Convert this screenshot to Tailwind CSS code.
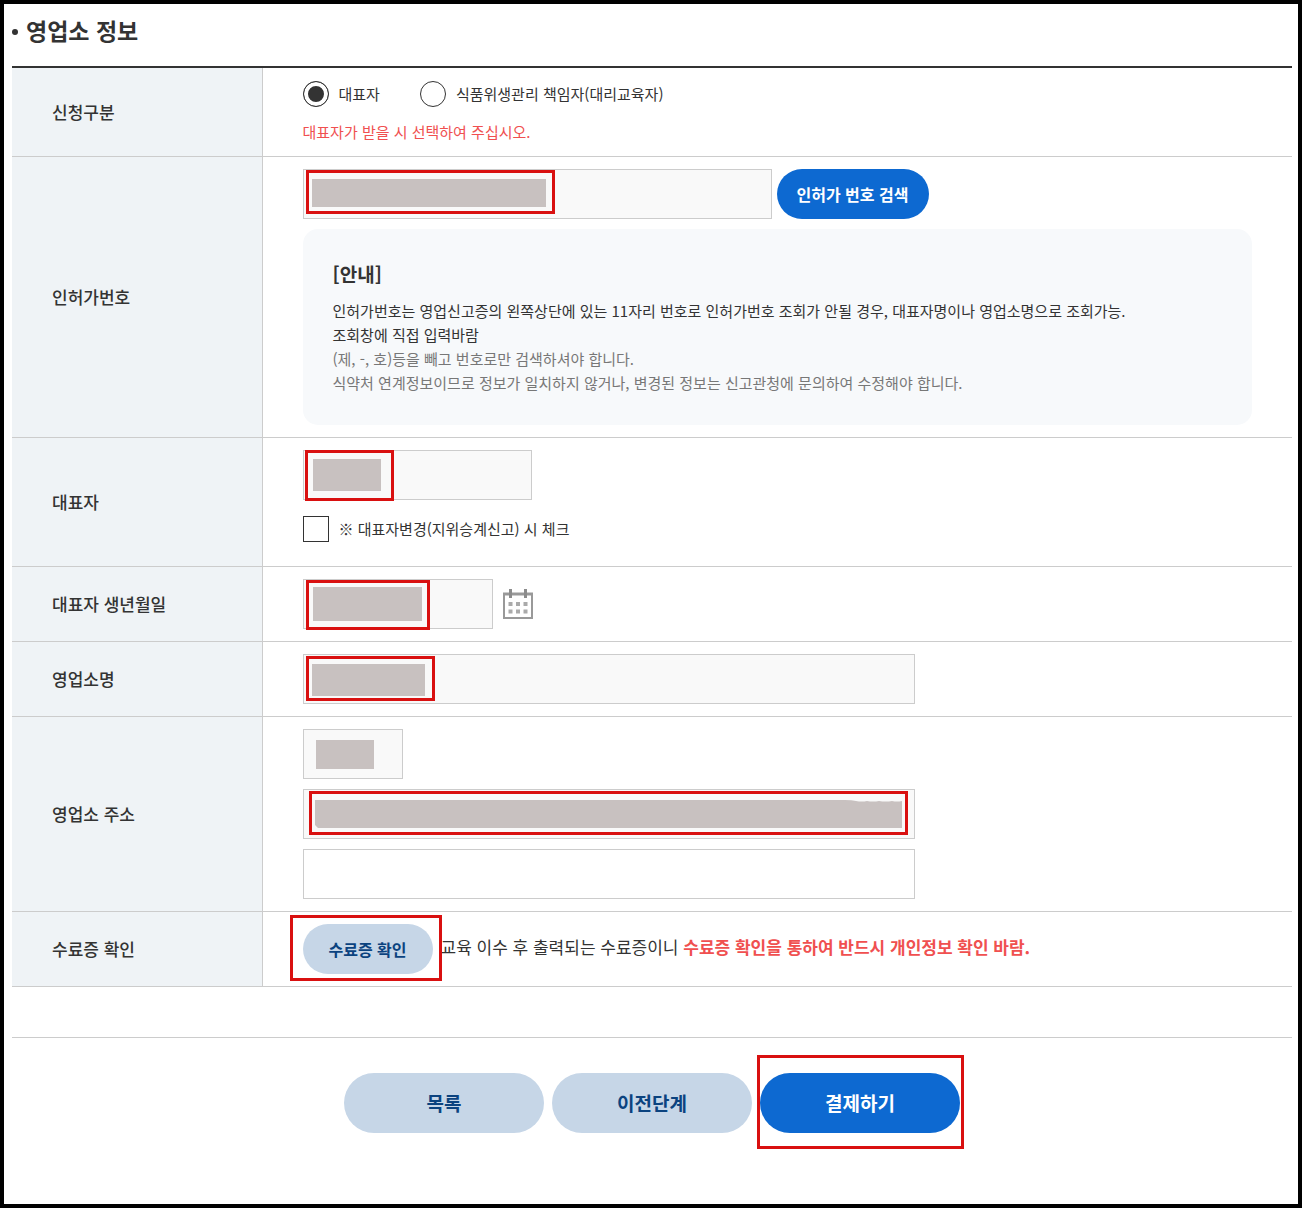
<!DOCTYPE html>
<html lang="ko">
<head>
  <meta charset="UTF-8" />
  <meta name="viewport" content="width=device-width, initial-scale=1.0"/>
  <title>영업소 정보</title>
  <script src="https://cdn.jsdelivr.net/npm/@tailwindcss/browser@4"></script>
</head>
<body class="min-h-screen border-4 border-black bg-white pt-[10px] pr-[6px] pb-10 pl-2 font-['Noto_Sans_CJK_KR',sans-serif] text-[15px] text-[#333]">

  <h2 class="mb-5 flex items-center gap-2 text-[23px] leading-8 font-bold">
    <span class="mt-[3px] size-[6px] rounded-full bg-[#333]"></span>영업소 정보
  </h2>

  <form>
    <table class="w-full border-t-2 border-[#333] text-left">
      <tbody>

        <tr class="border-b border-[#ccc]">
          <th scope="row" class="w-[250px] border-r border-[#ccc] bg-[#eff3f6] px-10 text-[17px] font-medium">신청구분</th>
          <td class="px-10 pt-[13px] pb-[11px]">
            <div class="flex items-center">
              <input type="radio" id="owner" name="applicant" checked class="mr-[10px] size-[26px] appearance-none rounded-full border border-[#333] bg-white checked:bg-[#333] checked:shadow-[inset_0_0_0_4px_white]" />
              <label for="owner" class="mr-10">대표자</label>
              <input type="radio" id="manager" name="applicant" class="mr-[10px] size-[26px] appearance-none rounded-full border border-[#333] bg-white checked:bg-[#333] checked:shadow-[inset_0_0_0_4px_white]" />
              <label for="manager">식품위생관리 책임자(대리교육자)</label>
            </div>
            <p class="mt-3 leading-[26px] text-[#f05050]">대표자가 받을 시 선택하여 주십시오.</p>
          </td>
        </tr>

        <tr class="border-b border-[#ccc]">
          <th scope="row" class="border-r border-[#ccc] bg-[#eff3f6] px-10 text-[17px] font-medium"><label for="licenseNo">인허가번호</label></th>
          <td class="px-10 py-3">
            <div class="flex items-center gap-[5px]">
              <div class="relative">
                <input type="text" id="licenseNo" readonly class="block h-[50px] w-[469px] border border-[#ccc] bg-[#f9f9f9] px-3" />
                <span class="pointer-events-none absolute top-px left-[3px] h-11 w-[249px] border-3 border-[#d91010]"></span>
                <span class="pointer-events-none absolute top-[10px] left-[9px] h-7 w-[234px] bg-[#c8c1c0]"></span>
              </div>
              <button type="button" class="h-[50px] w-[152px] rounded-full bg-[#0d69d1] text-[16px] font-bold text-white">인허가 번호 검색</button>
            </div>
            <div class="mt-[10px] rounded-[15px] bg-[#f7f9fb] p-[30px] leading-6">
              <h3 class="mb-[10px] text-[19px] leading-[30px] font-bold">[안내]</h3>
              <p>인허가번호는 영업신고증의 왼쪽상단에 있는 11자리 번호로 인허가번호 조회가 안될 경우, 대표자명이나 영업소명으로 조회가능.<br>조회창에 직접 입력바람</p>
              <p class="text-[#777]">(제, -, 호)등을 빼고 번호로만 검색하셔야 합니다.<br>식약처 연계정보이므로 정보가 일치하지 않거나, 변경된 정보는 신고관청에 문의하여 수정해야 합니다.</p>
            </div>
          </td>
        </tr>

        <tr class="border-b border-[#ccc]">
          <th scope="row" class="border-r border-[#ccc] bg-[#eff3f6] px-10 text-[17px] font-medium"><label for="ownerName">대표자</label></th>
          <td class="px-10 pt-3 pb-6">
            <div class="relative">
              <input type="text" id="ownerName" readonly class="block h-[50px] w-[229px] border border-[#ccc] bg-[#f9f9f9] px-3" />
              <span class="pointer-events-none absolute top-0 left-[2px] h-[51px] w-[89px] border-3 border-[#d91010]"></span>
              <span class="pointer-events-none absolute top-[9px] left-[10px] h-8 w-[68px] bg-[#c8c1c0]"></span>
            </div>
            <div class="mt-4 flex items-center gap-[10px]">
              <input type="checkbox" id="ownerChanged" class="size-[26px] appearance-none border border-[#333] bg-white checked:bg-[#333] checked:shadow-[inset_0_0_0_4px_white]" />
              <label for="ownerChanged">※ 대표자변경(지위승계신고) 시 체크</label>
            </div>
          </td>
        </tr>

        <tr class="border-b border-[#ccc]">
          <th scope="row" class="border-r border-[#ccc] bg-[#eff3f6] px-10 text-[17px] font-medium"><label for="birth">대표자 생년월일</label></th>
          <td class="px-10 py-3">
            <div class="flex items-center gap-[10px]">
              <div class="relative">
                <input type="text" id="birth" readonly class="block h-[50px] w-[190px] border border-[#ccc] bg-[#f9f9f9] px-3" />
                <span class="pointer-events-none absolute top-px left-[3px] h-[50px] w-[124px] border-3 border-[#d91010]"></span>
                <span class="pointer-events-none absolute top-2 left-[10px] h-[34px] w-[109px] bg-[#c8c1c0]"></span>
              </div>
              <button type="button" aria-label="달력">
                <svg class="block size-[30px]" viewBox="0 0 30 30" fill="none">
                  <path d="M1 5V29H29V5" stroke="#999" stroke-width="2"/>
                  <path d="M0 5H30" stroke="#999" stroke-width="3"/>
                  <path d="M7.5 0V9M22.5 0V9" stroke="#8c8c8c" stroke-width="3"/>
                  <path d="M5.5 15H9.500M13 15H17M20.500 15H24.500M5.500 22.500H9.500M13 22.500H17M20.500 22.500H24.500" stroke="#aaa" stroke-width="4"/>
                </svg>
              </button>
            </div>
          </td>
        </tr>

        <tr class="border-b border-[#ccc]">
          <th scope="row" class="border-r border-[#ccc] bg-[#eff3f6] px-10 text-[17px] font-medium"><label for="shopName">영업소명</label></th>
          <td class="px-10 py-3">
            <div class="relative">
              <input type="text" id="shopName" readonly class="block h-[50px] w-[612px] border border-[#ccc] bg-[#f9f9f9] px-3" />
              <span class="pointer-events-none absolute top-[2px] left-[3px] h-[45px] w-[129px] border-3 border-[#d91010]"></span>
              <span class="pointer-events-none absolute top-[10px] left-[9px] h-8 w-[113px] bg-[#c8c1c0]"></span>
            </div>
          </td>
        </tr>

        <tr class="border-b border-[#ccc]">
          <th scope="row" class="border-r border-[#ccc] bg-[#eff3f6] px-10 text-[17px] font-medium"><label for="zipcode">영업소 주소</label></th>
          <td class="px-10 py-3">
            <div class="flex flex-col gap-[10px]">
              <div class="relative">
                <input type="text" id="zipcode" readonly class="block h-[50px] w-[100px] border border-[#ccc] bg-[#f9f9f9] px-3" />
                <span class="pointer-events-none absolute top-[11px] left-[13px] h-[29px] w-[58px] bg-[#c8c1c0]"></span>
              </div>
              <div class="relative">
                <input type="text" id="address" aria-label="기본 주소" readonly class="block h-[50px] w-[612px] border border-[#ccc] bg-[#f9f9f9] px-3" />
                <span class="pointer-events-none absolute top-[2px] left-[6px] h-11 w-[599px] border-3 border-[#d91010]"></span>
                <svg class="pointer-events-none absolute top-[11px] left-3 h-7 w-[587px]" viewBox="0 0 587 28">
                  <path d="M0 0H530Q537 0 541 1Q547 2 552 1Q558 2 564 1Q571 2 577 1Q582 2 587 1V28H3L0 25Z" fill="#c8c1c0"/>
                </svg>
              </div>
              <input type="text" id="addressDetail" aria-label="상세 주소" class="block h-[50px] w-[612px] border border-[#ccc] bg-white px-3" />
            </div>
          </td>
        </tr>

        <tr class="border-b border-[#ccc]">
          <th scope="row" class="border-r border-[#ccc] bg-[#eff3f6] px-10 text-[17px] font-medium">수료증 확인</th>
          <td class="px-10 py-3">
            <div class="flex items-center gap-2">
              <div class="relative">
                <button type="button" class="block h-[50px] w-[130px] rounded-full bg-[#c6d6e7] text-[16px] font-bold text-[#0b437f]">수료증 확인</button>
                <span class="pointer-events-none absolute -top-[9px] -left-[13px] h-[66px] w-[152px] border-3 border-[#d91010]"></span>
              </div>
              <p class="pb-1 text-[17px]">교육 이수 후 출력되는 수료증이니 <strong class="font-bold text-[#f05050]">수료증 확인을 통하여 반드시 개인정보 확인 바람.</strong></p>
            </div>
          </td>
        </tr>

      </tbody>
    </table>

    <div class="mt-[50px] flex justify-center gap-2 border-t border-[#ccc] pt-[35px] text-[19px] font-bold">
      <button type="button" class="h-[60px] w-[200px] rounded-full bg-[#c6d6e7] text-[#0b437f]">목록</button>
      <button type="button" class="h-[60px] w-[200px] rounded-full bg-[#c6d6e7] text-[#0b437f]">이전단계</button>
      <div class="relative">
        <button type="submit" class="h-[60px] w-[200px] rounded-full bg-[#0d69d1] text-white">결제하기</button>
        <span class="pointer-events-none absolute -top-[18px] -left-[3px] h-[94px] w-[207px] border-3 border-[#d91010]"></span>
      </div>
    </div>
  </form>

</body>
</html>
